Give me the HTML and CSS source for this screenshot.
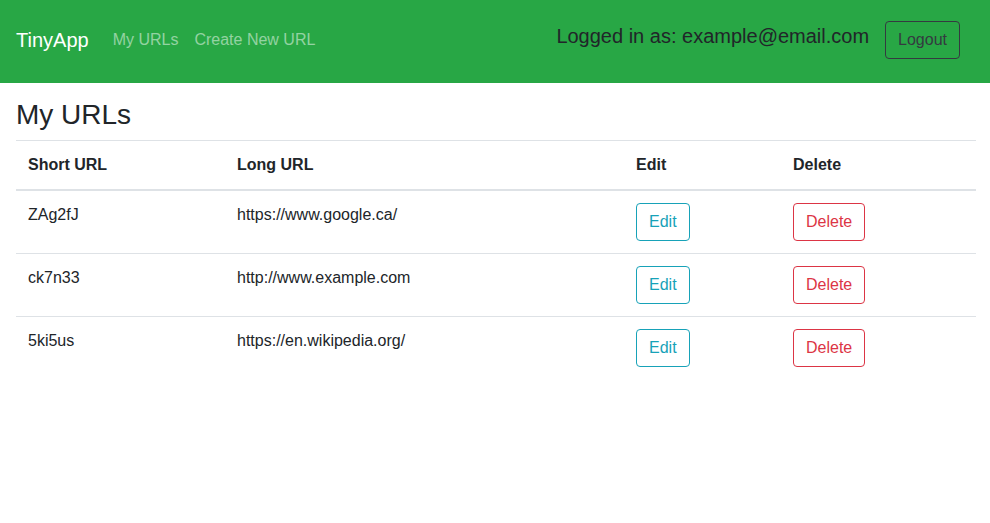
FILE: index.html
```html
<!DOCTYPE html>
<html lang="en">
<head>
<meta charset="utf-8">
<title>TinyApp</title>
<link rel="stylesheet" href="styles.css">
</head>
<body>
<nav class="navbar">
  <a class="brand" href="#">TinyApp</a>
  <div class="nav-links">
    <a class="nav-link" href="#">My URLs</a>
    <a class="nav-link" href="#">Create New URL</a>
  </div>
  <form class="user-form">
    <h5 class="user-label">Logged in as: example@email.com</h5>
    <button type="button" class="btn btn-dark-outline logout">Logout</button>
  </form>
</nav>
<main class="content">
  <h3 class="page-title">My URLs</h3>
  <table class="url-table">
    <thead>
      <tr>
        <th class="col-short">Short URL</th>
        <th class="col-long">Long URL</th>
        <th class="col-edit">Edit</th>
        <th class="col-delete">Delete</th>
      </tr>
    </thead>
    <tbody>
      <tr>
        <td>ZAg2fJ</td>
        <td>https://www.google.ca/</td>
        <td><button type="button" class="btn btn-info-outline">Edit</button></td>
        <td><button type="button" class="btn btn-danger-outline">Delete</button></td>
      </tr>
      <tr>
        <td>ck7n33</td>
        <td>http://www.example.com</td>
        <td><button type="button" class="btn btn-info-outline">Edit</button></td>
        <td><button type="button" class="btn btn-danger-outline">Delete</button></td>
      </tr>
      <tr>
        <td>5ki5us</td>
        <td>https://en.wikipedia.org/</td>
        <td><button type="button" class="btn btn-info-outline">Edit</button></td>
        <td><button type="button" class="btn btn-danger-outline">Delete</button></td>
      </tr>
    </tbody>
  </table>
</main>
</body>
</html>
```

FILE: styles.css
```css
* { box-sizing: border-box; }

body {
  margin: 0;
  font-family: "Liberation Sans", Arial, sans-serif;
  font-size: 16px;
  line-height: 1.5;
  color: #212529;
  background: #fff;
}

.navbar {
  display: flex;
  align-items: center;
  height: 83px;
  padding: 0 16px 4px;
  background: #28a745;
}

.brand {
  font-size: 20px;
  line-height: 30px;
  padding: 5px 0;
  margin-right: 16px;
  color: #fff;
  text-decoration: none;
}

.nav-links {
  display: flex;
}

.nav-link {
  padding: 0 8px;
  color: rgba(255, 255, 255, 0.5);
  text-decoration: none;
  line-height: 24px;
}

.user-form {
  margin: 0 14px 0 auto;
  display: flex;
  align-items: center;
}

.user-label {
  margin: 0 0 8px 0;
  font-size: 20px;
  font-weight: 400;
  line-height: 1.2;
  color: #212529;
}

.btn {
  display: inline-block;
  font-family: inherit;
  font-size: 16px;
  line-height: 24px;
  padding: 6px 12px;
  border: 1px solid transparent;
  border-radius: 4px;
  background: transparent;
  cursor: pointer;
}

.logout {
  margin-left: 16px;
}

.btn-dark-outline {
  color: #343a40;
  border-color: #343a40;
}

.btn-info-outline {
  color: #17a2b8;
  border-color: #17a2b8;
}

.btn-danger-outline {
  color: #dc3545;
  border-color: #dc3545;
}

.content {
  padding: 0 16px;
}

.page-title {
  margin: 15px 0 8px;
  font-size: 28px;
  font-weight: 400;
  line-height: 1.2;
}

.url-table {
  width: 100%;
  border-collapse: collapse;
  table-layout: fixed;
  margin-bottom: 16px;
}

.url-table th,
.url-table td {
  padding: 12px;
  text-align: left;
  vertical-align: top;
  border-top: 1px solid #dee2e6;
}

.url-table th {
  font-weight: 700;
  vertical-align: bottom;
  border-bottom: 2px solid #dee2e6;
}

.col-short { width: 209px; }
.col-long { width: 399px; }
.col-edit { width: 157px; }
.col-delete { width: 195px; }
```
